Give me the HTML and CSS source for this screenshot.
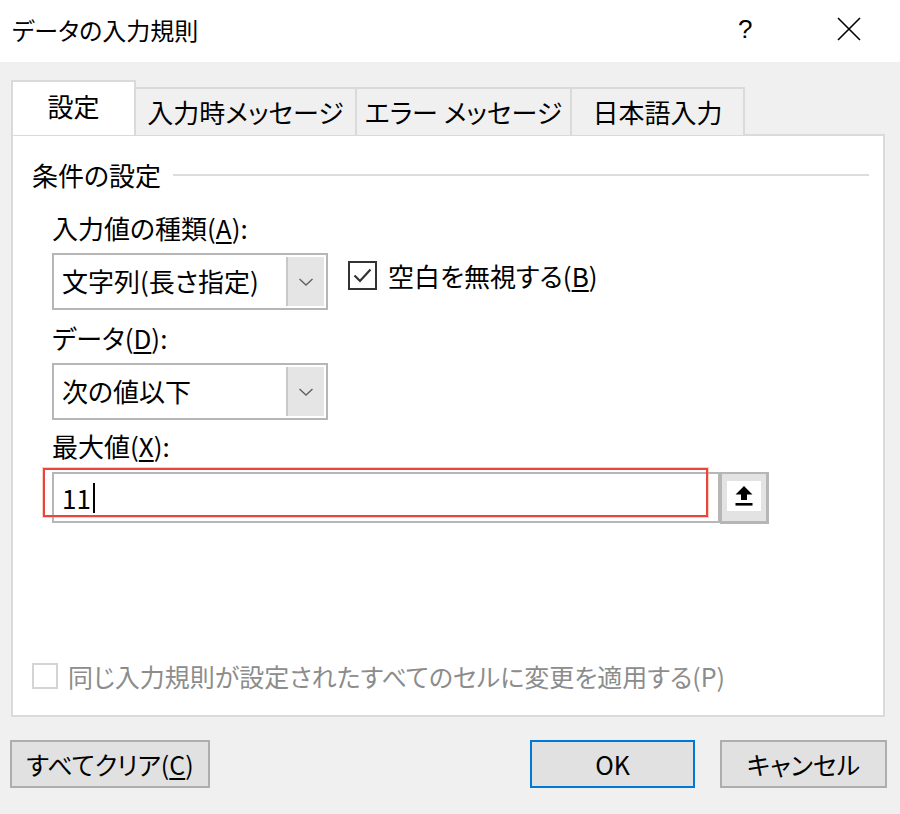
FILE: index.html
```html
<!DOCTYPE html>
<html lang="ja">
<head>
<meta charset="utf-8">
<title>データの入力規則</title>
<link rel="stylesheet" href="styles.css">
</head>
<body>
<div class="dialog">
  <div class="titlebar">
    <span class="title">データの入力規則</span>
    <span class="help">?</span>
    <span class="close">
      <svg width="26" height="26" viewBox="0 0 26 26"><path d="M2 2 L24 24 M24 2 L2 24" stroke="#000" stroke-width="1.6" fill="none"/></svg>
    </span>
  </div>

  <div class="content">
    <div class="tabs">
      <div class="tab tab-active tab-w1">設定</div>
      <div class="tab tab-w2">入力時メッセージ</div>
      <div class="tab tab-w3">エラー メッセージ</div>
      <div class="tab tab-w4">日本語入力</div>
    </div>

    <div class="panel">
      <div class="group-head">
        <span class="group-title">条件の設定</span>
        <span class="group-line"></span>
      </div>

      <div class="field-label label-a">入力値の種類(<u>A</u>):</div>
      <div class="row">
        <div class="select">
          <span class="select-text">文字列(長さ指定)</span>
          <span class="select-btn">
            <svg width="16" height="10" viewBox="0 0 16 10"><path d="M1.5 2 L8 8 L14.5 2" stroke="#606060" stroke-width="1.4" fill="none"/></svg>
          </span>
        </div>
        <div class="check-row">
          <span class="checkbox">
            <svg width="25" height="25" viewBox="0 0 25 25"><path d="M4.5 12.5 L10 18 L20.5 6.5" stroke="#333" stroke-width="2.2" fill="none"/></svg>
          </span>
          <span class="check-text">空白を無視する(<u>B</u>)</span>
        </div>
      </div>

      <div class="field-label label-d">データ(<u>D</u>):</div>
      <div class="select">
        <span class="select-text">次の値以下</span>
        <span class="select-btn">
          <svg width="16" height="10" viewBox="0 0 16 10"><path d="M1.5 2 L8 8 L14.5 2" stroke="#606060" stroke-width="1.4" fill="none"/></svg>
        </span>
      </div>

      <div class="field-label label-x">最大値(<u>X</u>):</div>
      <div class="input-row">
        <div class="input"><span class="input-text">11</span><span class="caret"></span></div>
        <div class="ref-btn">
          <span class="ref-inner">
            <svg width="20" height="22" viewBox="0 0 20 22"><path d="M10 1 L18.5 9.5 L13 9.5 L13 15 L7 15 L7 9.5 L1.5 9.5 Z" fill="#000"/><rect x="1.5" y="18" width="17" height="2.6" fill="#000"/></svg>
          </span>
        </div>
        <div class="highlight"></div>
      </div>

      <div class="apply-row">
        <span class="checkbox checkbox-disabled"></span>
        <span class="apply-text">同じ入力規則が設定されたすべてのセルに変更を適用する(P)</span>
      </div>
    </div>

    <div class="buttons">
      <button class="btn btn-clear">すべてクリア(<u>C</u>)</button>
      <div class="btn-group">
        <button class="btn btn-ok">OK</button>
        <button class="btn btn-cancel">キャンセル</button>
      </div>
    </div>
  </div>
</div>
</body>
</html>
```

FILE: styles.css
```css
* { box-sizing: border-box; }

html, body {
  margin: 0;
  padding: 0;
}

body {
  width: 900px;
  height: 814px;
  background: #f0f0f0;
  font-family: "Noto Sans CJK JP", "Noto Sans", sans-serif;
  font-feature-settings: "palt";
  color: #000;
  overflow: hidden;
}

u { text-decoration-thickness: 1.5px; text-underline-offset: 3px; }

.titlebar {
  height: 62px;
  background: #fff;
  display: flex;
  align-items: center;
  padding: 0 0 4px 12px;
}

.title {
  font-size: 24px;
  flex: 1;
}

.help {
  font-size: 26px;
  width: 20px;
  margin-right: 78px;
  font-family: "Liberation Sans", sans-serif;
}

.close {
  display: flex;
  margin-right: 38px;
}

.content {
  padding: 18px 13px 0 11px;
}

.tabs {
  display: flex;
  align-items: flex-end;
  height: 55px;
  margin-bottom: -1px;
  position: relative;
  z-index: 1;
}

.tab {
  height: 48px;
  border: 2px solid #dadada;
  border-bottom: none;
  border-left-width: 0;
  background: #f0f0f0;
  font-size: 26px;
  display: flex;
  align-items: center;
  justify-content: center;
  padding-bottom: 2px;
}

.tab-active {
  height: 55px;
  background: #fff;
  border-left-width: 2px;
  padding-bottom: 6px;
}

.tab-w1 { width: 125px; }
.tab-w2 { width: 221px; }
.tab-w3 { width: 215px; }
.tab-w4 { width: 173px; }

.panel {
  width: 874px;
  height: 583px;
  background: #fff;
  border: 2px solid #dadada;
  display: flex;
  flex-direction: column;
  padding: 24px 14px 24px 39px;
}

.group-head {
  display: flex;
  align-items: center;
  margin-left: -20px;
  height: 30px;
}

.group-title {
  font-size: 26px;
  line-height: 30px;
}

.group-line {
  flex: 1;
  height: 2px;
  background: #dcdcdc;
  margin-left: 12px;
}

.field-label {
  font-size: 26px;
  line-height: 32px;
}

.label-a { margin-top: 22px; }
.label-d { margin-top: 12px; }
.label-x { margin-top: 10px; }

.row {
  display: flex;
  align-items: flex-start;
  margin-top: 9px;
}

.select {
  width: 276px;
  height: 57px;
  border: 2px solid #b6b6b6;
  display: flex;
  background: #fff;
}

.label-d + .select { margin-top: 9px; }

.select-text {
  flex: 1;
  font-size: 26px;
  line-height: 52px;
  padding-left: 8px;
}

.select-btn {
  width: 38px;
  background: #e5e5e5;
  border-left: 2px solid #c8c8c8;
  display: flex;
  align-items: center;
  justify-content: center;
  margin: 2px 2px 2px 0;
}

.check-row {
  display: flex;
  align-items: center;
  margin-left: 20px;
  margin-top: 6px;
  height: 32px;
}

.checkbox {
  width: 29px;
  height: 29px;
  border: 2px solid #333;
  display: flex;
  align-items: center;
  justify-content: center;
  background: #fff;
}

.check-text {
  font-size: 26px;
  margin-left: 11px;
}

.input-row {
  display: flex;
  margin-top: 10px;
  position: relative;
  height: 52px;
}

.input {
  width: 668px;
  height: 51px;
  border: 2px solid #b6b6b6;
  display: flex;
  align-items: center;
  padding-left: 8px;
  background: #fff;
}

.input-text {
  font-size: 26px;
}

.caret {
  width: 2px;
  height: 30px;
  background: #000;
  margin-left: 2px;
}

.ref-btn {
  width: 49px;
  height: 52px;
  background: #e3e3e3;
  border: 2px solid #b6b6b6;
  border-right-width: 3px;
  border-bottom-width: 3px;
  display: flex;
  align-items: flex-start;
  justify-content: center;
  padding-top: 7px;
}

.ref-inner {
  width: 34px;
  height: 30px;
  background: #fff;
  display: flex;
  align-items: center;
  justify-content: center;
}

.highlight {
  position: absolute;
  left: -9px;
  top: -4px;
  width: 665px;
  height: 49px;
  border: 2px solid #e8453c;
  box-shadow: 0 0 0 1px rgba(240, 150, 120, 0.45);
  pointer-events: none;
}

.apply-row {
  margin-top: auto;
  display: flex;
  align-items: center;
  margin-left: -20px;
  height: 30px;
}

.checkbox-disabled {
  width: 26px;
  height: 26px;
  border: 2px solid #d4d4d4;
}

.apply-text {
  font-size: 25px;
  color: #8c8c8c;
  margin-left: 10px;
}

.buttons {
  display: flex;
  justify-content: space-between;
  margin-top: 23px;
}

.btn-group {
  display: flex;
  gap: 25px;
}

.btn {
  height: 48px;
  border: 2px solid #adadad;
  background: #e1e1e1;
  font-family: "Noto Sans CJK JP", "Noto Sans", sans-serif;
  font-feature-settings: "palt";
  font-size: 25px;
  color: #000;
  padding: 0;
  display: flex;
  align-items: center;
  justify-content: center;
}

.btn-clear { width: 200px; margin-left: -1px; }
.btn-ok { width: 165px; border-color: #0078d7; }
.btn-cancel { width: 167px; }
```
